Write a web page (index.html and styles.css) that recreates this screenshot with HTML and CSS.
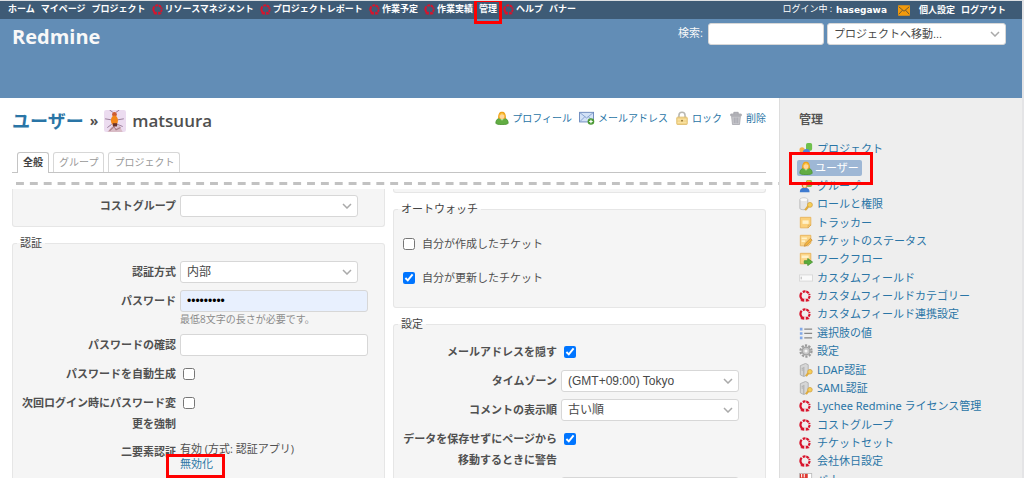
FILE: index.html
```html
<!DOCTYPE html>
<html lang="ja">
<head>
<meta charset="utf-8">
<title>matsuura - ユーザー - Redmine</title>
<meta name="viewport" content="width=device-width, initial-scale=1">
<link rel="stylesheet" href="styles.css">
</head>
<body>
<svg class="symbols" aria-hidden="true">
  <symbol id="i-lychee" viewBox="0 0 16 16"><path d="M6 13.600A6.200 6.200 0 0 1 3.600 3.600" fill="none" stroke="#d8142c" stroke-width="3"/><path d="M5 2.600A6.200 6.200 0 0 1 14 7M14.100 8a6.200 6.200 0 0 1-3.800 5.400" fill="none" stroke="#d8142c" stroke-width="2.800" stroke-dasharray="3.800 .9"/><path d="M1.500 14.500l5.500-3.500v4.500zM14.500 14.500L9 11v4.500z" fill="#d8142c"/></symbol>
  <symbol id="i-mail" viewBox="0 0 16 14"><rect width="16" height="14" rx="1" fill="#f39a0c"/><path d="M1 2l7 6 7-6M1 12l5-5.500M15 12l-5-5.500" fill="none" stroke="#6b5836" stroke-width="1.300"/></symbol>
  <symbol id="i-user" viewBox="0 0 16 16"><path d="M1 14c0-4 2-6 7-6s7 2 7 6c0 2-14 2-14 0z" fill="#62ad43" stroke="#4f9636"/><path d="M5 8l3 3 3-3z" fill="#b9e09b"/><path d="M3.500 8C3.500 3 5 .8 8 .8S12.500 3 12.500 8c-2 1.500-7 1.500-9 0z" fill="#eda31c"/><ellipse cx="8" cy="6" rx="2.800" ry="3.200" fill="#ffd79b"/><path d="M4.800 5c1-3 5-3.500 6.400 0-2-.2-3-1-3.400-1.500C7.500 4.300 6 5 4.800 5z" fill="#ffc53d"/></symbol>
  <symbol id="i-mailadd" viewBox="0 0 18 16"><rect x=".5" y="1.500" width="16" height="11" fill="#d3e2f7" stroke="#6482b8"/><path d="M1 2l7.500 6L16 2M1 12l5.500-5.500M16 12l-5.500-5.500" fill="none" stroke="#7f9ccc"/><circle cx="13.500" cy="12" r="3.800" fill="#4c9a35"/><path d="M13.500 10v4M11.500 12h4" stroke="#fff" stroke-width="1.400"/></symbol>
  <symbol id="i-lock" viewBox="0 0 16 16"><path d="M4.500 8V5a3.500 3.500 0 0 1 7 0v3" fill="none" stroke="#b9b8b2" stroke-width="1.800"/><rect x="2" y="7" width="12" height="8.500" rx="1" fill="#f3d58a" stroke="#dfbb6a"/><path d="M3 10h10M3 13h10" stroke="#fae6ac"/><circle cx="8" cy="11" r="1" fill="#8c6d2b"/></symbol>
  <symbol id="i-trash" viewBox="0 0 16 16"><path d="M2 3.500h12v2H2zM5.500 3.500V1.500h5v2" fill="#bcbcc1" stroke="#a2a2a8"/><path d="M3 6h10l-1 9.500H4z" fill="#c8c8cd" stroke="#a8a8ae"/><path d="M6 7.500v6.500M8 7.500v6.500M10 7.500v6.500" stroke="#a2a2aa"/></symbol>
  <symbol id="i-projects" viewBox="0 0 16 16"><circle cx="3.500" cy="9" r="3" fill="#f3b04b"/><rect x="8" y="1" width="7" height="9" rx="2" fill="#6fc04c"/><path d="M4 14c0-4 1.500-6 4.500-6s4.500 2 4.500 6z" fill="#4d86d8"/></symbol>
  <symbol id="i-group" viewBox="0 0 16 16"><rect x="8" y="1" width="7" height="8" rx="2" fill="#86b84c"/><circle cx="11" cy="4" r="2.500" fill="#f0b73d"/><path d="M1 15c0-4 2-5 5.500-5s5.500 1 5.500 5z" fill="#3f7bd0"/><circle cx="6.500" cy="7" r="3.400" fill="#d98c2d"/><circle cx="6.500" cy="8" r="2" fill="#ffdcae"/></symbol>
  <symbol id="i-roles" viewBox="0 0 16 16"><path d="M1 3c0-2.500 9-2.500 9 0v10c0 2-9 2-9 0z" fill="#e6e6e6" stroke="#b5b5b5"/><ellipse cx="5.500" cy="3" rx="4" ry="1.500" fill="#fafafa"/><path d="M7 15l4-5" stroke="#e0ac3c" stroke-width="2.400"/><circle cx="12.500" cy="9" r="2.800" fill="#f6cf57" stroke="#d6a648"/></symbol>
  <symbol id="i-note" viewBox="0 0 16 16"><path d="M1.500 1.500h12v9l-3 3h-9z" fill="#fbd07a" stroke="#e8b25a"/><path d="M13.500 10.500h-3v3z" fill="#fff3d2" stroke="#dba548"/><path d="M4 5h7v4H4z" fill="#fff1c8"/></symbol>
  <symbol id="i-status" viewBox="0 0 16 16"><path d="M1.500 1.500h12v9l-3 3h-9z" fill="#fbd587" stroke="#e8b25a"/><path d="M3 5h6M3 8h4" stroke="#fff1c8" stroke-width="2"/><path d="M6 14l1-3 6-6 2 2-6 6z" fill="#f3b33c" stroke="#c8954a"/></symbol>
  <symbol id="i-flow" viewBox="0 0 16 16"><path d="M1.500 1.500h12v9l-3 3h-9z" fill="#fbd587" stroke="#e8b25a"/><path d="M3 4h8v3H3z" fill="#fff1c8"/><path d="M6 10h4V7.500l5.500 4-5.500 4V13H6z" fill="#5aae3c" stroke="#4a9636"/></symbol>
  <symbol id="i-field" viewBox="0 0 16 16"><rect x=".5" y="4.500" width="15" height="7" fill="#fafafa" stroke="#d6d6d6"/><path d="M2.500 6.500v3" stroke="#aaa"/></symbol>
  <symbol id="i-list" viewBox="0 0 16 16"><path d="M1 2h3v3H1zM1 7h3v3H1zM1 12h3v3H1z" fill="#83a9e8"/><path d="M6 3.500h9M6 8.500h9M6 13.500h9" stroke="#888" stroke-width="1.400"/></symbol>
  <symbol id="i-gear" viewBox="0 0 16 16"><circle cx="8" cy="8" r="6.300" fill="none" stroke="#9c9c9c" stroke-width="2.600" stroke-dasharray="2.500 1.458"/><circle cx="8" cy="8" r="4.500" fill="#c8c8c8" stroke="#a2a2a2" stroke-width="1.500"/><circle cx="8" cy="8" r="1.800" fill="#f4f4f4"/></symbol>
  <symbol id="i-server" viewBox="0 0 16 16"><path d="M1.500 3l6-2.500 3 1.500v11l-5 2.500-4-2z" fill="#d6d6d6" stroke="#adadad"/><path d="M5.500 4.500V15M3 6h1.500M3 8h1.500" stroke="#a2a2a2"/><path d="M8 15l3-4" stroke="#e0ac3c" stroke-width="2.400"/><circle cx="12.500" cy="10" r="2.600" fill="#f6cf57" stroke="#d6a648"/></symbol>
  <symbol id="i-banner" viewBox="0 0 16 16"><rect x=".5" y=".5" width="14" height="14" fill="#fff" stroke="#bbb"/><path d="M1 1h9v12H1z" fill="#df3a32"/><path d="M3 1v4M6 1v4" stroke="#fff" stroke-width="1.200"/></symbol>
</svg>
<div class="page">
  <nav class="top-menu">
    <ul class="menu">
      <li><a href="#">ホーム</a></li>
      <li><a href="#">マイページ</a></li>
      <li><a href="#">プロジェクト</a></li>
      <li><a href="#"><svg class="icon"><use href="#i-lychee"/></svg>リソースマネジメント</a></li>
      <li><a href="#"><svg class="icon"><use href="#i-lychee"/></svg>プロジェクトレポート</a></li>
      <li><a href="#"><svg class="icon"><use href="#i-lychee"/></svg>作業予定</a></li>
      <li><a href="#"><svg class="icon"><use href="#i-lychee"/></svg>作業実績</a></li>
      <li class="marked marked-menu"><a href="#">管理</a></li>
      <li><a href="#"><svg class="icon"><use href="#i-lychee"/></svg>ヘルプ</a></li>
      <li><a href="#">バナー</a></li>
    </ul>
    <div class="account">
      <span class="logged">ログイン中 : <a href="#">hasegawa</a></span>
      <a href="#" class="mail" aria-label="メール"><svg class="icon"><use href="#i-mail"/></svg></a>
      <a href="#">個人設定</a>
      <a href="#">ログアウト</a>
    </div>
  </nav>
  <header class="header">
    <h1 class="brand">Redmine</h1>
    <form class="quick-search">
      <label for="q">検索:</label>
      <input id="q" class="control search" type="text">
      <select class="control jump" aria-label="プロジェクトへ移動"><option>プロジェクトへ移動...</option></select>
    </form>
  </header>
  <div class="body">
    <main class="content">
      <div class="title-row">
        <h2 class="title"><a href="#">ユーザー</a> <span class="sep">»</span>
          <svg class="avatar" viewBox="0 0 20 20"><rect width="20" height="20" rx="2" fill="#ecdcf0"/><path d="M8 2L5 0M11 2l3-2M7 9L1 8M12 9l6-1M7 13l-4 3M12 13l5 2" stroke="#917391" stroke-width=".8"/><path d="M3 20l4-5 3 2 4-3 3 6z" fill="#d9bcc6"/><path d="M5 19l4-4 2 3 4-2" stroke="#a87c86" fill="none"/><ellipse cx="9.500" cy="4" rx="2.200" ry="2.200" fill="#cc5b32"/><ellipse cx="9.500" cy="9.500" rx="3.200" ry="4.500" fill="#f38719"/><path d="M8 12h4v3H8z" fill="#69332b"/></svg>
          <span class="name">matsuura</span></h2>
        <div class="contextual">
          <a href="#"><svg class="icon"><use href="#i-user"/></svg>プロフィール</a>
          <a href="#"><svg class="icon wide"><use href="#i-mailadd"/></svg>メールアドレス</a>
          <a href="#"><svg class="icon"><use href="#i-lock"/></svg>ロック</a>
          <a href="#"><svg class="icon"><use href="#i-trash"/></svg>削除</a>
        </div>
      </div>
      <ul class="tabs">
        <li><a href="#" class="selected">全般</a></li>
        <li><a href="#">グループ</a></li>
        <li><a href="#">プロジェクト</a></li>
      </ul>
      <div class="cut-line"></div>
      <form class="columns">
        <div class="column">
          <div class="box box-continued rows">
            <div class="row"><label for="cost">コストグループ</label><div><select id="cost" class="control"><option></option></select></div></div>
          </div>
          <fieldset class="box">
            <legend>認証</legend>
            <div class="rows auth">
              <div class="row"><label for="auth">認証方式</label><div><select id="auth" class="control"><option>内部</option></select></div></div>
              <div class="row"><label for="pw">パスワード</label><div><input id="pw" class="control filled" type="password" value="password1"><em class="info">最低8文字の長さが必要です。</em></div></div>
              <div class="row"><label for="pw2">パスワードの確認</label><div><input id="pw2" class="control" type="password"></div></div>
              <div class="row"><label for="gen">パスワードを自動生成</label><div class="check"><input id="gen" type="checkbox"></div></div>
              <div class="row"><label for="force">次回ログイン時にパスワード変更を強制</label><div class="check"><input id="force" type="checkbox"></div></div>
              <div class="row"><span class="label">二要素認証</span><div class="twofa">有効 (方式: 認証アプリ)<br><span class="marked marked-link"><a href="#">無効化</a></span></div></div>
            </div>
          </fieldset>
        </div>
        <div class="column">
          <div class="box box-end"></div>
          <fieldset class="box">
            <legend>オートウォッチ</legend>
            <div class="watch">
              <label><input type="checkbox">自分が作成したチケット</label>
              <label><input type="checkbox" checked>自分が更新したチケット</label>
            </div>
          </fieldset>
          <fieldset class="box">
            <legend>設定</legend>
            <div class="rows">
              <div class="row"><label for="hide">メールアドレスを隠す</label><div class="check"><input id="hide" type="checkbox" checked></div></div>
              <div class="row"><label for="tz">タイムゾーン</label><div><select id="tz" class="control"><option>(GMT+09:00) Tokyo</option></select></div></div>
              <div class="row"><label for="order">コメントの表示順</label><div><select id="order" class="control"><option>古い順</option></select></div></div>
              <div class="row"><label for="warn">データを保存せずにページから移動するときに警告</label><div class="check"><input id="warn" type="checkbox" checked></div></div>
              <div class="row"><span class="label"></span><div><select class="control" aria-label="テキストエリアのフォント"><option></option></select></div></div>
            </div>
          </fieldset>
        </div>
      </form>
    </main>
    <aside class="sidebar">
      <h3>管理</h3>
      <ul class="admin">
        <li><a href="#"><svg class="icon"><use href="#i-projects"/></svg>プロジェクト</a></li>
        <li class="marked marked-admin"><a href="#" class="current"><svg class="icon"><use href="#i-user"/></svg>ユーザー</a></li>
        <li><a href="#"><svg class="icon"><use href="#i-group"/></svg>グループ</a></li>
        <li><a href="#"><svg class="icon"><use href="#i-roles"/></svg>ロールと権限</a></li>
        <li><a href="#"><svg class="icon"><use href="#i-note"/></svg>トラッカー</a></li>
        <li><a href="#"><svg class="icon"><use href="#i-status"/></svg>チケットのステータス</a></li>
        <li><a href="#"><svg class="icon"><use href="#i-flow"/></svg>ワークフロー</a></li>
        <li><a href="#"><svg class="icon"><use href="#i-field"/></svg>カスタムフィールド</a></li>
        <li><a href="#"><svg class="icon lychee"><use href="#i-lychee"/></svg>カスタムフィールドカテゴリー</a></li>
        <li><a href="#"><svg class="icon lychee"><use href="#i-lychee"/></svg>カスタムフィールド連携設定</a></li>
        <li><a href="#"><svg class="icon"><use href="#i-list"/></svg>選択肢の値</a></li>
        <li><a href="#"><svg class="icon"><use href="#i-gear"/></svg>設定</a></li>
        <li><a href="#"><svg class="icon"><use href="#i-server"/></svg>LDAP認証</a></li>
        <li><a href="#"><svg class="icon"><use href="#i-server"/></svg>SAML認証</a></li>
        <li><a href="#"><svg class="icon lychee"><use href="#i-lychee"/></svg>Lychee Redmine ライセンス管理</a></li>
        <li><a href="#"><svg class="icon lychee"><use href="#i-lychee"/></svg>コストグループ</a></li>
        <li><a href="#"><svg class="icon lychee"><use href="#i-lychee"/></svg>チケットセット</a></li>
        <li><a href="#"><svg class="icon lychee"><use href="#i-lychee"/></svg>会社休日設定</a></li>
        <li><a href="#"><svg class="icon"><use href="#i-banner"/></svg>バナー</a></li>
      </ul>
    </aside>
  </div>
</div>
</body>
</html>
```

FILE: styles.css
```css
*, *::before, *::after { box-sizing: border-box; }

body {
  margin: 0;
  background: #fff;
  color: #505050;
  font: 11px/16px "Open Sans", "Noto Sans CJK JP", sans-serif;
}

ul { margin: 0; padding: 0; list-style: none; }
a { color: #2a75a6; text-decoration: none; }
.symbols { position: absolute; width: 0; height: 0; }
.icon { width: 14px; height: 14px; flex: none; }

.page {
  display: flex;
  flex-direction: column;
  height: 100vh;
  overflow: hidden;
  border-top: 1px solid #dcdfe2;
  border-right: 2px solid #e4e4e6;
}

/* Red frames around the items to click */
.marked { position: relative; }
.marked::after {
  content: "";
  position: absolute;
  z-index: 2;
  border: 3px solid #f00;
  pointer-events: none;
}
.marked-menu::after { inset: -2px -5px -5px; }
.marked-admin::after { inset: -6px auto -8px -10px; width: 84px; }
.marked-link::after { inset: -2px -12px -7px -14px; }

/* Top menu */
.top-menu {
  display: flex;
  justify-content: space-between;
  flex: none;
  height: 18px;
  padding: 0 16px 0 8px;
  background: #3e5b76;
  color: #fff;
  font-size: 9px;
  line-height: 16px;
}
.top-menu a { display: flex; align-items: center; gap: 2px; color: #fff; font-weight: 700; }
.menu { display: flex; gap: 6px; white-space: nowrap; }
.menu .icon { width: 11px; height: 11px; }
.account { display: flex; gap: 6px; white-space: nowrap; }
.logged { display: flex; gap: 4px; }
.logged a { font-family: "DejaVu Sans", sans-serif; }
.account .mail { padding: 0 3px 0 5px; }
.mail .icon { width: 12px; height: 11px; }

/* Header */
.header {
  display: flex;
  justify-content: space-between;
  flex: none;
  height: 79px;
  padding: 4px 16px 0 12px;
  background: #628db6;
  color: #f8f8f8;
}
.brand { margin: 0; font-size: 20px; line-height: 28px; font-weight: 700; }
.quick-search { display: flex; align-items: flex-start; gap: 3px; line-height: 20px; }
.quick-search label { margin-right: 2px; }

.control {
  display: block;
  height: 22px;
  padding: 0 6px;
  border: 1px solid #d7d7d7;
  border-radius: 3px;
  background: #fff;
  color: #484848;
  font: 12px "Liberation Sans", "Noto Sans CJK JP", sans-serif;
}
input.control { width: 188px; }
select.control {
  width: 178px;
  appearance: none;
  background: #fff url("data:image/svg+xml,%3Csvg xmlns='http://www.w3.org/2000/svg' width='10' height='6'%3E%3Cpath d='M1 1l4 4 4-4' fill='none' stroke='%23aaa' stroke-width='1.500'/%3E%3C/svg%3E") no-repeat right 5px center;
}
input.search { width: 116px; }
select.jump { width: 179px; font-size: 11px; }
input.filled { background: #e8f0fe; color: #000; }

/* Page body */
.body { display: flex; flex: 1; min-height: 0; }
.content { flex: 1; min-width: 0; padding: 8px 13px 0 12px; }

.title-row { display: flex; justify-content: space-between; }
.title {
  display: flex;
  align-items: center;
  gap: 6px;
  margin: 0;
  font-size: 18px;
  line-height: 30px;
  font-weight: 700;
}
.sep { font-size: 14px; }
.name { font-size: 17px; font-weight: 600; }
.avatar { width: 22px; height: 22px; }
.contextual { display: flex; gap: 7px; height: 24px; align-items: center; font-size: 10px; }
.contextual a { display: flex; align-items: center; gap: 3px; }
.contextual .wide { width: 16px; }

.tabs {
  display: flex;
  gap: 4px;
  margin-top: 16px;
  padding-left: 5px;
  border-bottom: 1px solid #c4c4c4;
  font-size: 10px;
  line-height: 19px;
}
.tabs a {
  display: block;
  padding: 0 5px;
  border: 1px solid #d7d7d7;
  border-bottom: 0;
  border-radius: 3px 3px 0 0;
  color: #999;
}
.tabs .selected { margin-bottom: -1px; padding-bottom: 1px; border-color: #c4c4c4; background: #fff; color: #444; font-weight: 700; }

.cut-line {
  height: 3px;
  margin: 9px -13px 4px 4px;
  background: linear-gradient(90deg, #c2c2c2 60%, transparent 60%) 0 0 / 14px 3px round;
}

/* Form */
.columns { display: grid; grid-template-columns: 1fr 1fr; gap: 8px; }
.column { display: flex; flex-direction: column; gap: 8px; min-width: 0; }
.box {
  min-width: 0;
  margin: 0;
  padding: 0;
  border: 1px solid #e6e6e6;
  border-radius: 3px;
  background: #f5f5f5;
}
.box legend { margin-left: 4px; padding: 0 3px; color: #444; }
.box-continued { border-top: 0; border-radius: 0 0 3px 3px; }
.box-end { height: 4px; border-top: 0; border-radius: 0 0 3px 3px; }
.rows { display: grid; gap: 7px; padding: 9px 8px; }
.rows.auth { padding-top: 10px; }
.box-continued.rows { padding-top: 6px; }
.row { display: grid; grid-template-columns: 155px 1fr; gap: 4px; line-height: 21px; }
.row label, .row .label { text-align: right; font-weight: 700; }
.info { display: block; color: #8c8c8c; font-size: 10px; line-height: 15px; font-style: normal; }
.check { display: flex; align-items: center; height: 22px; padding-left: 3px; }
input[type="checkbox"] { width: 12px; height: 12px; margin: 0; }
.twofa { line-height: 15px; }
.watch { padding: 10px 9px 12px; }
.watch label { display: flex; align-items: center; gap: 7px; height: 34px; }

/* Sidebar */
.sidebar {
  display: flex;
  flex-direction: column;
  flex: none;
  width: 243px;
  padding: 12px 8px 0 19px;
  border-left: 1px solid #ddd;
  background: #eee;
}
.sidebar h3 { margin: 0 0 10px; color: #555; font-size: 12px; line-height: 20px; }
.admin {
  display: grid;
  grid-auto-rows: 1fr;
  flex: 1;
  min-height: 0;
  margin-bottom: -11px;
  font-family: "Noto Sans", "Noto Sans CJK JP", sans-serif;
}
.admin li { display: flex; align-items: center; white-space: nowrap; }
.admin a { display: flex; align-items: center; gap: 4px; }
.admin .lychee { width: 12px; height: 12px; margin-right: 2px; }
.admin .current {
  gap: 2px;
  margin-left: -2px;
  padding: 0 3px 0 2px;
  border-radius: 2px;
  background: #9eb7d5;
  color: #fff;
}
```
